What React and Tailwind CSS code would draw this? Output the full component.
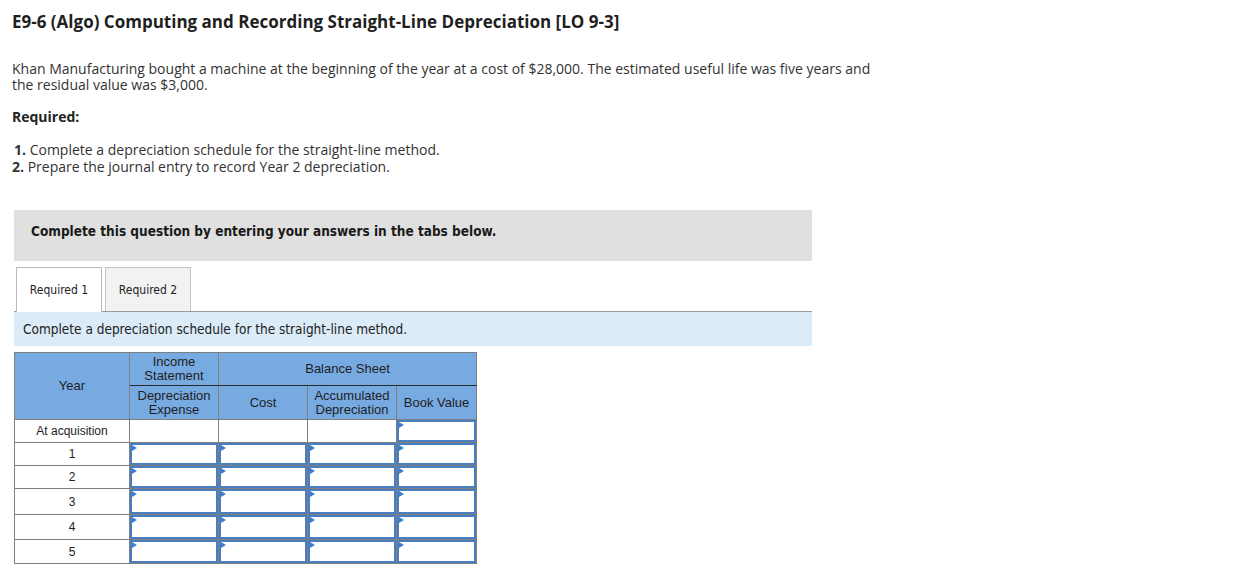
const years = ["1", "2", "3", "4", "5"];
const rowHeights = [
  { tr: "h-[23px]", box: "h-[22px]" },
  { tr: "h-[23px]", box: "h-[22px]" },
  { tr: "h-[26px]", box: "h-[25px]" },
  { tr: "h-[25px]", box: "h-[24px]" },
  { tr: "h-[24px]", box: "h-[23px]" },
];

const InputCell = ({ box }) => (
  <td className="border border-[#7f7f7f] p-0">
    <div className={`relative ${box} border-2 border-[#4a7ebf] bg-white`}>
      <span className="absolute left-0 top-0 w-0 h-0 border-y-[3px] border-y-transparent border-l-[5px] border-l-[#3b7fd4]"></span>
    </div>
  </td>
);

const App = () => {
  return (
    <div className="w-[1248px] h-[567px] bg-white overflow-hidden text-[#222] font-['Open_Sans',sans-serif]">
      <div className="px-3 pt-[10px]">
        <h1 className="text-[17px] font-bold leading-6 text-[#1f1f1f]">
          E9-6 (Algo) Computing and Recording Straight-Line Depreciation [LO 9-3]
        </h1>

        <p className="mt-[27px] w-[872px] text-[14px] leading-4 text-[#333]">
          Khan Manufacturing bought a machine at the beginning of the year at a cost of $28,000. The estimated useful life was five years and the residual value was $3,000.
        </p>

        <p className="mt-[16px] text-[14px] leading-4 font-bold text-[#222]">Required:</p>

        <div className="mt-[16px] text-[14px] leading-[17px] text-[#333]">
          <p className="pl-[2px]"><span className="font-bold">1.</span> Complete a depreciation schedule for the straight-line method.</p>
          <p><span className="font-bold">2.</span> Prepare the journal entry to record Year 2 depreciation.</p>
        </div>
      </div>

      <div className="ml-[14px] w-[798px]">
        {/* Instructions box */}
        <div className="mt-[35px] h-[51px] bg-[#e0e0e0] pl-[17px] pt-[11px]">
          <p className="text-[13.5px] font-bold text-[#1a1a1a] font-['DejaVu_Sans_Condensed','DejaVu_Sans',sans-serif]">
            Complete this question by entering your answers in the tabs below.
          </p>
        </div>

        {/* Tabs */}
        <div className="mt-[6px] flex items-end gap-[3px] pl-[2px] border-b border-[#9a9a9a] h-[45px] font-['DejaVu_Sans_Condensed','DejaVu_Sans',sans-serif] text-[12px] text-[#222]">
          <div className="h-[45px] w-[86px] bg-white border border-b-0 border-[#b8b8b8] flex items-center justify-center -mb-px">
            Required 1
          </div>
          <div className="h-[44px] w-[86px] bg-[#f2f2f2] border border-b-0 border-[#c4c4c4] flex items-center justify-center">
            Required 2
          </div>
        </div>

        <div className="h-[34px] bg-[#dbebf8] flex items-center pl-[9px] font-['DejaVu_Sans_Condensed','DejaVu_Sans',sans-serif] text-[13.5px] text-[#222]">
          Complete a depreciation schedule for the straight-line method.
        </div>

        {/* Schedule table */}
        <table className="mt-[6px] border-collapse table-fixed w-[462px] font-['Liberation_Sans',Arial,sans-serif] text-[12px] text-[#222] leading-[14px]">
          <colgroup>
            <col className="w-[115px]" />
            <col className="w-[89px]" />
            <col className="w-[89px]" />
            <col className="w-[89px]" />
            <col className="w-[80px]" />
          </colgroup>
          <thead className="bg-[#78aae2] text-[13px] text-[#1e1e1e]">
            <tr className="h-[33px]">
              <th rowSpan="2" className="border border-[#7f7f7f] font-normal">Year</th>
              <th className="border border-[#7f7f7f] border-b-[#2a2a2a] font-normal">Income<br />Statement</th>
              <th colSpan="3" className="border border-[#7f7f7f] border-b-[#2a2a2a] font-normal">Balance Sheet</th>
            </tr>
            <tr className="h-[34px]">
              <th className="border border-[#7f7f7f] font-normal">Depreciation<br />Expense</th>
              <th className="border border-[#7f7f7f] font-normal">Cost</th>
              <th className="border border-[#7f7f7f] font-normal">Accumulated<br />Depreciation</th>
              <th className="border border-[#7f7f7f] font-normal">Book Value</th>
            </tr>
          </thead>
          <tbody>
            <tr className="h-[23px]">
              <td className="border border-[#7f7f7f] text-center">At acquisition</td>
              <td className="border border-[#7f7f7f]"></td>
              <td className="border border-[#7f7f7f]"></td>
              <td className="border border-[#7f7f7f]"></td>
              <InputCell box="h-[22px]" />
            </tr>
            {years.map((y, i) => (
              <tr key={y} className={rowHeights[i].tr}>
                <td className="border border-[#7f7f7f] text-center">{y}</td>
                <InputCell box={rowHeights[i].box} />
                <InputCell box={rowHeights[i].box} />
                <InputCell box={rowHeights[i].box} />
                <InputCell box={rowHeights[i].box} />
              </tr>
            ))}
          </tbody>
        </table>
      </div>
    </div>
  );
};

export default App;
